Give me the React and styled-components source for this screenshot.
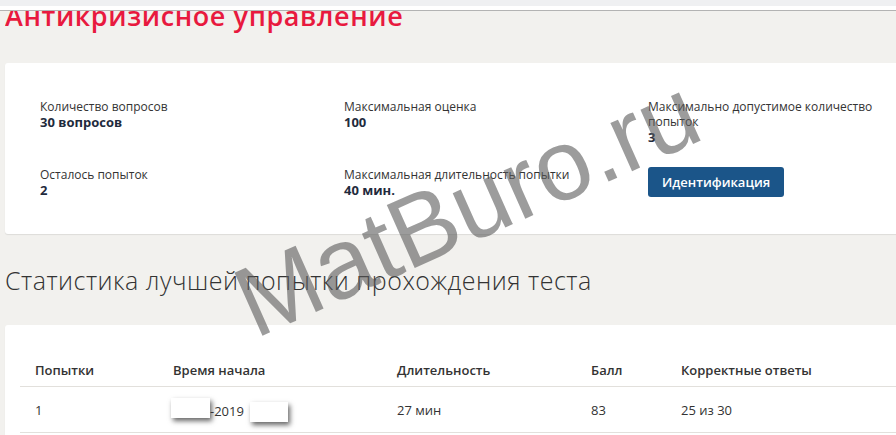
import styled, { createGlobalStyle } from "styled-components";

const GlobalStyle = createGlobalStyle`
	html, body {
		margin: 0;
		padding: 0;
		background: #f2f1ee;
		overflow: hidden;
	}
	body {
		font-family: "Open Sans", "Noto Sans", sans-serif;
		color: #333;
	}
`;

const Page = styled.div`
	position: relative;
	width: 896px;
	height: 435px;
	overflow: hidden;
`;

const TopStrip = styled.div`
	height: 6px;
	background: #eff0f2;
`;

const TopBar = styled.div`
	height: 4px;
	background: #fff;
	border-bottom: 1px solid #b3b3b3;
`;

const Content = styled.div`
	padding-left: 5px;
`;

const TitleClip = styled.div`
	height: 52px;
	overflow: hidden;
`;

const PageTitle = styled.h1`
	margin: -9px 0 0;
	font-size: 27px;
	line-height: 27px;
	font-weight: 600;
	letter-spacing: 0.6px;
	color: #e8193e;
	white-space: nowrap;
`;

const Card = styled.div`
	background: #fff;
	border-radius: 3px;
	margin-right: -40px;
	box-shadow: 0 1px 1px rgba(0, 0, 0, 0.09);
	padding: ${(p) => p.$pad};
`;

const InfoGrid = styled.div`
	display: grid;
	grid-template-columns: 304px 304px 230px;
	row-gap: 21px;
	align-items: start;
`;

const Info = styled.div`
	display: flex;
	flex-direction: column;
`;

const Label = styled.span`
	font-size: 12px;
	line-height: 15px;
	color: #333;
`;

const Value = styled.span`
	font-size: 13px;
	line-height: 17px;
	font-weight: 700;
	color: #1f2b3d;
`;

const Button = styled.button`
	justify-self: start;
	height: 30px;
	padding: 0 14px;
	border: none;
	border-radius: 3px;
	background: #1b5589;
	color: #fff;
	font-family: "Open Sans", sans-serif;
	font-size: 13px;
	font-weight: 600;
	cursor: pointer;
`;

const SectionTitle = styled.h2`
	margin: 32px 0 30px;
	font-size: 25px;
	line-height: 29px;
	font-weight: 300;
	letter-spacing: 0.5px;
	color: #333;
	white-space: nowrap;
`;

const Table = styled.table`
	width: 920px;
	table-layout: fixed;
	border-collapse: collapse;
	font-size: 13px;
	line-height: 20px;
	color: #333;
`;

const Th = styled.th`
	text-align: left;
	font-weight: 600;
	padding: 15px 15px 6px;
	border-bottom: 1px solid #e2e0dc;
	white-space: nowrap;
	width: ${(p) => p.$w || "auto"};
`;

const Td = styled.td`
	padding: 11px 15px 10px;
	border-bottom: 1px solid #e2e0dc;
	white-space: nowrap;
`;

const Redact = styled.span`
	display: inline-block;
	width: ${(p) => p.$w}px;
	height: 20px;
	background: #fff;
	vertical-align: ${(p) => p.$drop}px;
	margin-left: ${(p) => p.$ml}px;
	box-shadow: 2px 3px 5px rgba(0, 0, 0, 0.6);
`;

const Watermark = styled.div`
	position: absolute;
	left: 255px;
	top: 254px;
	font-family: "Liberation Sans", Arial, sans-serif;
	font-size: 100px;
	line-height: 100px;
	color: rgba(90, 90, 90, 0.6);
	white-space: nowrap;
	transform-origin: 0 85px;
	transform: rotate(-24deg);
	pointer-events: none;
`;

const info = [
	{ label: "Количество вопросов", value: "30 вопросов" },
	{ label: "Максимальная оценка", value: "100" },
	{ label: "Максимально допустимое количество попыток", value: "3" },
	{ label: "Осталось попыток", value: "2" },
	{ label: "Максимальная длительность попытки", value: "40 мин." },
];

const App = () => {
	return (
		<Page>
			<GlobalStyle />
			<TopStrip />
			<TopBar />
			<Content>
				<TitleClip>
					<PageTitle>Антикризисное управление</PageTitle>
				</TitleClip>
				<Card $pad='36px 35px 35px'>
					<InfoGrid>
						{info.map((item) => (
							<Info key={item.label}>
								<Label>{item.label}</Label>
								<Value>{item.value}</Value>
							</Info>
						))}
						<Button>Идентификация</Button>
					</InfoGrid>
				</Card>
				<SectionTitle>Статистика лучшей попытки прохождения теста</SectionTitle>
				<Card $pad='20px 0 20px 15px'>
					<Table>
						<thead>
							<tr>
								<Th $w='108px'>Попытки</Th>
								<Th $w='194px'>Время начала</Th>
								<Th $w='164px'>Длительность</Th>
								<Th $w='60px'>Балл</Th>
								<Th>Корректные ответы</Th>
							</tr>
						</thead>
						<tbody>
							<tr>
								<Td>1</Td>
								<Td>
									<Redact $w={39} $drop={-2} $ml={-2} />
									-2019
									<Redact $w={38} $drop={-6} $ml={6} />
								</Td>
								<Td>27 мин</Td>
								<Td>83</Td>
								<Td>25 из 30</Td>
							</tr>
						</tbody>
					</Table>
				</Card>
			</Content>
			<Watermark>MatBuro.ru</Watermark>
		</Page>
	);
};

export default App;
